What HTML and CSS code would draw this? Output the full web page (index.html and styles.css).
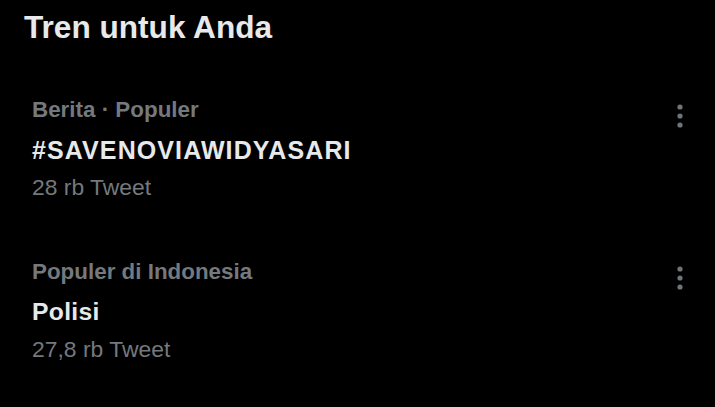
FILE: index.html
```html
<!DOCTYPE html>
<html lang="id">
<head>
<meta charset="utf-8">
<title>Tren untuk Anda</title>
<link rel="stylesheet" href="styles.css">
</head>
<body>
<section class="panel">
  <h2 class="panel-title">Tren untuk Anda</h2>
  <div class="trend">
    <div class="trend-body">
      <div class="trend-meta">Berita · Populer</div>
      <div class="trend-name tag">#SAVENOVIAWIDYASARI</div>
      <div class="trend-count">28 rb Tweet</div>
    </div>
    <svg class="trend-more" viewBox="0 0 20 24" width="20" height="24" aria-hidden="true">
      <circle cx="10" cy="3" r="2.6"/>
      <circle cx="10" cy="12" r="2.6"/>
      <circle cx="10" cy="21" r="2.6"/>
    </svg>
  </div>
  <div class="trend">
    <div class="trend-body">
      <div class="trend-meta">Populer di Indonesia</div>
      <div class="trend-name">Polisi</div>
      <div class="trend-count">27,8 rb Tweet</div>
    </div>
    <svg class="trend-more" viewBox="0 0 20 24" width="20" height="24" aria-hidden="true">
      <circle cx="10" cy="3" r="2.6"/>
      <circle cx="10" cy="12" r="2.6"/>
      <circle cx="10" cy="21" r="2.6"/>
    </svg>
  </div>
</section>
</body>
</html>
```
FILE: styles.css
```css
html, body {
  margin: 0;
  padding: 0;
  background: #000;
}
body {
  width: 715px;
  height: 407px;
  overflow: hidden;
  font-family: "Liberation Sans", Arial, sans-serif;
  color: #e7e9ea;
}
.panel {
  display: flex;
  flex-direction: column;
}
.panel-title {
  margin: 0;
  padding: 7px 24px 20px 24px;
  font-size: 31.6px;
  line-height: 40px;
  font-weight: 700;
  color: #e7e9ea;
}
.trend {
  display: flex;
  align-items: flex-start;
  padding: 29px 25px 28px 32px;
}
.trend-body {
  flex: 1;
  display: flex;
  flex-direction: column;
}
.trend-meta {
  font-size: 22.4px;
  line-height: 28px;
  font-weight: 700;
  color: #74797e;
}
.trend-name {
  margin-top: 11px;
  font-size: 24.7px;
  line-height: 30px;
  font-weight: 700;
  letter-spacing: 0.3px;
  color: #e7e9ea;
}
.trend-name.tag {
  font-size: 25px;
  letter-spacing: 1.1px;
}
.trend-count {
  margin-top: 8px;
  font-size: 22.9px;
  line-height: 28px;
  color: #74797e;
}
.trend-more {
  margin-top: 8px;
  fill: #6f7479;
}
```
